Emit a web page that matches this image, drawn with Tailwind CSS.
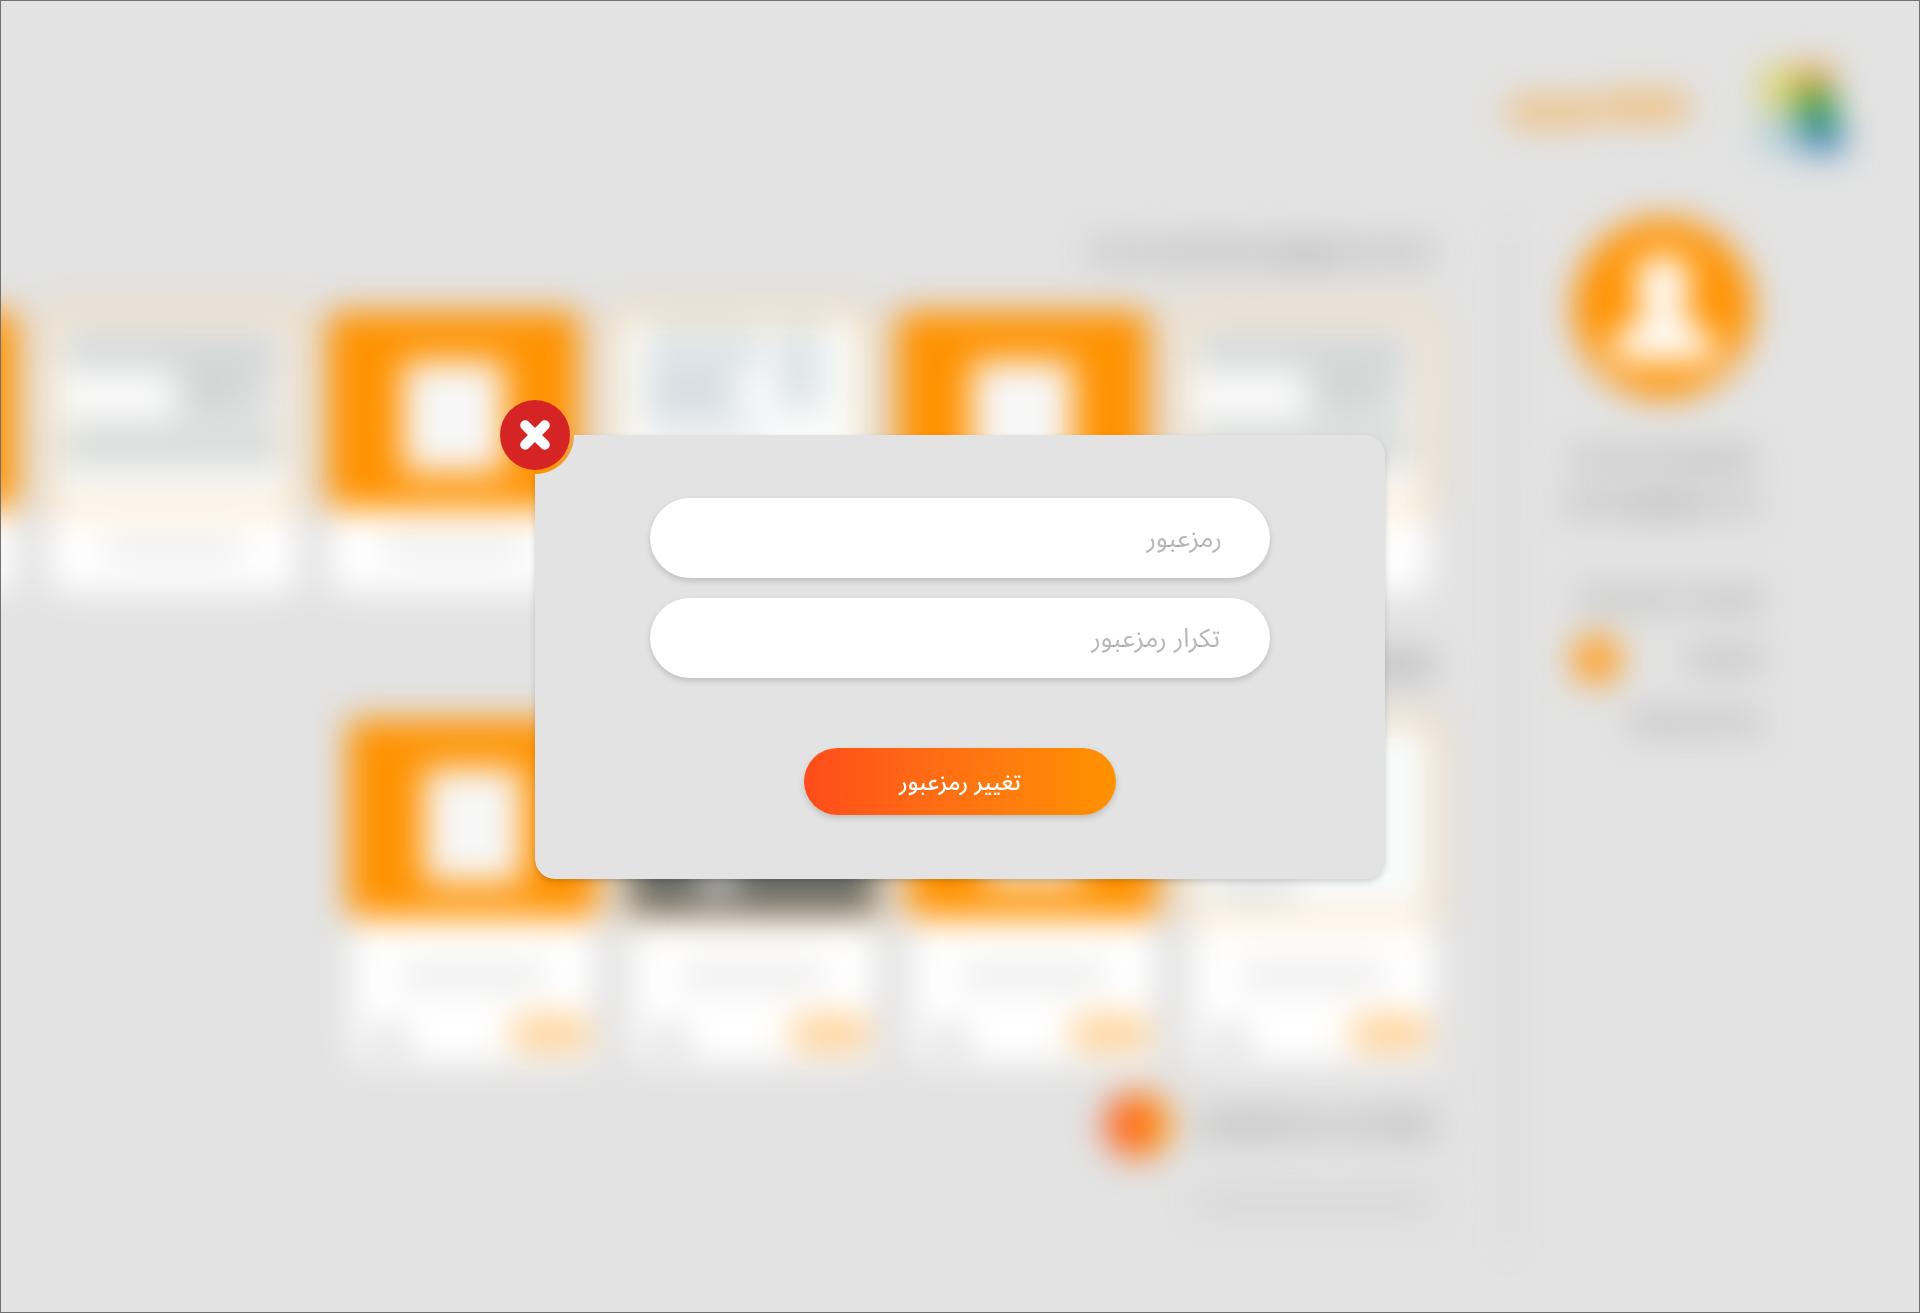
<!DOCTYPE html>
<html lang="fa" dir="rtl">
<head>
<meta charset="utf-8">
<title>تغییر رمزعبور</title>
<script src="https://cdn.jsdelivr.net/npm/@tailwindcss/browser@4"></script>
</head>
<body class="bg-[#e3e3e3] font-['Noto_Sans_Arabic','DejaVu_Sans',sans-serif]">
<div class="relative h-[1313px] w-[1920px] overflow-hidden bg-[#e3e3e3]">

  <!-- dimmed page behind the dialog -->
  <div class="h-full w-full blur-[17px]" aria-hidden="true">
    <header class="flex h-[216px] items-start pr-[72px] pt-[62px]">
      <svg class="h-[96px] w-[92px]" viewBox="0 0 92 96">
        <path d="M4 4H48V50H4Z" fill="#dcd678"/>
        <path d="M42 4H74L78 30H42Z" fill="#e39a34"/>
        <path d="M42 30H76L84 66H46Z" fill="#1f9a3e"/>
        <path d="M4 52H46V90H4Z" fill="#b0cdd6"/>
        <path d="M46 62H84L90 90H46Z" fill="#3c80bb"/>
      </svg>
      <div class="mr-[66px] mt-[30px] flex">
        <div class="h-[30px] w-[92px] rounded-full bg-[#f0bf7c]"></div>
        <div class="mt-[6px] h-[28px] w-[92px] rounded-full bg-[#f0bf7c]"></div>
      </div>
    </header>

    <div class="flex">
      <aside class="w-[411px] shrink-0 pr-[157px]">
        <div class="w-[200px]">
          <svg class="mx-auto size-[184px]" viewBox="0 0 184 184">
            <circle cx="92" cy="92" r="90" fill="#ff9200"/>
            <path d="M92 38c17 0 28 11 28 28 0 13-6 22-10 28v5c3 10 36 12 36 34 0 10-5 13-14 13H53c-9 0-14-3-14-13 0-22 33-24 36-34v-5c-4-6-11-15-11-28 0-17 11-28 28-28z" fill="#fff"/>
          </svg>
          <div class="mt-[47px] flex justify-center">
            <div class="h-[24px] w-[82px] bg-[#c5c5c5]"></div>
            <div class="h-[24px] w-[104px] bg-[#cbcbcb]"></div>
          </div>
          <div class="mt-[22px] flex">
            <div class="h-[22px] w-[66px] bg-[#cccccc]"></div>
            <div class="h-[24px] w-[66px] bg-[#bfbfbf]"></div>
            <div class="h-[22px] w-[68px] bg-[#c8c8c8]"></div>
          </div>
          <div class="mt-[71px] flex gap-2">
            <div class="h-[24px] w-[72px] bg-[#c7c7c7]"></div>
            <div class="h-[24px] w-[106px] bg-[#cacaca]"></div>
          </div>
          <div class="mt-[22px] flex h-[50px] items-center justify-between">
            <div class="h-[24px] w-[76px] bg-[#c7c7c7]"></div>
            <div class="ml-[9px] size-[49px] rounded-full bg-[#ff9c1c]"></div>
          </div>
          <div class="mt-[26px] flex">
            <div class="h-[24px] w-[66px] bg-[#cacaca]"></div>
            <div class="h-[24px] w-[68px] bg-[#c7c7c7]"></div>
          </div>
        </div>
      </aside>

      <div class="mt-[6px] h-[1032px] w-px shrink-0 bg-[#707070]"></div>

      <main class="min-w-0 flex-1 pr-[73px] pt-[24px]">
        <div class="flex h-[24px] gap-1">
          <div class="h-[24px] w-[88px] bg-[#c9c9c9]"></div>
          <div class="h-[28px] w-[74px] bg-[#c3c3c3]"></div>
          <div class="h-[26px] w-[108px] bg-[#c8c8c8]"></div>
          <div class="h-[24px] w-[64px] bg-[#cacaca]"></div>
        </div>

        <!-- purchased items -->
        <div class="mr-[3px] mt-[47px] flex gap-[30px]">
          <div class="w-[253px] shrink-0">
            <div class="flex h-[198px] flex-col items-end rounded-lg border-[3px] border-[#ff9200] bg-[#f9faf9] px-[14px] pt-[12px]">
              <div class="h-[44px] w-full bg-[#d6d9d9]"></div>
              <div class="flex h-[46px] w-full">
                <div class="h-full w-[36px] bg-[#dddfdf]"></div>
                <div class="h-full w-[70px] bg-[#d3d5d5]"></div>
              </div>
              <div class="mt-[6px] h-[46px] w-full bg-[#d9dcda]"></div>
            </div>
            <div class="mx-auto flex h-[83px] w-[245px] justify-center rounded-b-lg bg-white pt-[28px]">
              <div class="h-[24px] w-[140px] bg-[#ebebeb]"></div>
            </div>
          </div>
          <div class="w-[253px] shrink-0">
            <div class="h-[198px] rounded-lg bg-[#ff9200] pt-[50px]">
              <div class="mx-auto h-[112px] w-[101px] rounded bg-[#f7f7f7]"></div>
            </div>
            <div class="mx-auto h-[83px] w-[245px] rounded-b-lg bg-white"></div>
          </div>
          <div class="w-[253px] shrink-0">
            <div class="flex h-[198px] items-start justify-end gap-[14px] rounded-lg border-[3px] border-[#ff9200] bg-[#fbfdfc] px-[30px] pt-[8px]">
              <div class="h-[90px] w-[48px] bg-[#dee4e7]"></div>
              <div class="flex flex-col items-end">
                <div class="h-[50px] w-[116px] bg-[#dfe5e8]"></div>
                <div class="h-[42px] w-[90px] bg-[#d6dee2]"></div>
                <div class="h-[30px] w-[116px] bg-[#e8ecef]"></div>
              </div>
            </div>
            <div class="mx-auto h-[83px] w-[245px] rounded-b-lg bg-white"></div>
          </div>
          <div class="mr-[3px] w-[253px] shrink-0">
            <div class="h-[198px] rounded-lg bg-[#ff9200] pt-[50px]">
              <div class="mx-auto h-[112px] w-[101px] rounded bg-[#f7f7f7]"></div>
            </div>
            <div class="mx-auto flex h-[83px] w-[245px] justify-center rounded-b-lg bg-white pt-[28px]">
              <div class="h-[24px] w-[140px] bg-[#ebebeb]"></div>
            </div>
          </div>
          <div class="-mr-[3px] w-[253px] shrink-0">
            <div class="flex h-[198px] flex-col items-end rounded-lg border-[3px] border-[#ff9200] bg-[#f9faf9] px-[14px] pt-[12px]">
              <div class="h-[44px] w-full bg-[#d6d9d9]"></div>
              <div class="flex h-[46px] w-full">
                <div class="h-full w-[36px] bg-[#dddfdf]"></div>
                <div class="h-full w-[70px] bg-[#d3d5d5]"></div>
              </div>
              <div class="mt-[6px] h-[46px] w-full bg-[#d9dcda]"></div>
            </div>
            <div class="mx-auto flex h-[83px] w-[245px] justify-center rounded-b-lg bg-white pt-[28px]">
              <div class="h-[24px] w-[140px] bg-[#ebebeb]"></div>
            </div>
          </div>
          <div class="w-[253px] shrink-0">
            <div class="h-[198px] rounded-lg bg-[#ff9200]"></div>
            <div class="mx-auto h-[83px] w-[245px] rounded-b-lg bg-white"></div>
          </div>
        </div>

        <div class="mt-[60px] h-[26px] w-[300px] bg-[#bfbfbf]"></div>

        <!-- suggested items -->
        <div class="-mr-[3px] mt-[41px] flex gap-[29px]">
          <div class="w-[251px] shrink-0">
            <div class="flex h-[199px] items-end rounded-lg border-[3px] border-[#ff9200] bg-[#f8fbfb] pb-[16px] pr-[140px]">
              <div class="h-[20px] w-[80px] bg-[#d9dedd]"></div>
            </div>
            <div class="mx-auto h-[145px] w-[242px] rounded-b-lg bg-white pt-[45px]">
              <div class="mx-auto h-[26px] w-[142px] bg-[#ebebeb]"></div>
              <div class="mt-[26px] flex items-center justify-between pl-[18px] pr-[3px]">
                <div class="h-[32px] w-[82px] rounded-full bg-[#ffcc8a]"></div>
                <div class="mt-[12px] h-[24px] w-[38px] bg-[#d8d8d8]"></div>
              </div>
            </div>
          </div>
          <div class="w-[251px] shrink-0">
            <div class="h-[199px] rounded-lg bg-[#ff9200] pt-[49px]">
              <div class="mx-auto h-[115px] w-[98px] rounded bg-[#f7f7f7]"></div>
            </div>
            <div class="mx-auto h-[145px] w-[242px] rounded-b-lg bg-white pt-[45px]">
              <div class="mx-auto h-[26px] w-[142px] bg-[#ebebeb]"></div>
              <div class="mt-[26px] flex items-center justify-between pl-[18px] pr-[3px]">
                <div class="h-[32px] w-[82px] rounded-full bg-[#ffcc8a]"></div>
                <div class="mt-[12px] h-[24px] w-[38px] bg-[#d8d8d8]"></div>
              </div>
            </div>
          </div>
          <div class="w-[251px] shrink-0">
            <div class="flex h-[199px] items-end justify-center rounded-lg border-[3px] border-[#ff9200] bg-[#6c6e6a]">
              <div class="mb-[20px] mr-[70px] h-[36px] w-[36px] bg-[#c4c4c4]"></div>
            </div>
            <div class="mx-auto h-[145px] w-[242px] rounded-b-lg bg-white pt-[45px]">
              <div class="mx-auto h-[26px] w-[142px] bg-[#ebebeb]"></div>
              <div class="mt-[26px] flex items-center justify-between pl-[18px] pr-[3px]">
                <div class="h-[32px] w-[82px] rounded-full bg-[#ffcc8a]"></div>
                <div class="mt-[12px] h-[24px] w-[38px] bg-[#d8d8d8]"></div>
              </div>
            </div>
          </div>
          <div class="w-[251px] shrink-0">
            <div class="h-[199px] rounded-lg bg-[#ff9200] pt-[49px]">
              <div class="mx-auto h-[115px] w-[98px] rounded bg-[#f7f7f7]"></div>
            </div>
            <div class="mx-auto h-[145px] w-[242px] rounded-b-lg bg-white pt-[45px]">
              <div class="mx-auto h-[26px] w-[142px] bg-[#ebebeb]"></div>
              <div class="mt-[26px] flex items-center justify-between pl-[18px] pr-[3px]">
                <div class="h-[32px] w-[82px] rounded-full bg-[#ffcc8a]"></div>
                <div class="mt-[12px] h-[24px] w-[38px] bg-[#d8d8d8]"></div>
              </div>
            </div>
          </div>
        </div>

        <div class="mt-[29px] flex items-center">
          <div class="h-[30px] w-[56px] bg-[#c7c7c7]"></div>
          <div class="h-[26px] w-[88px] bg-[#cccccc]"></div>
          <div class="h-[28px] w-[92px] bg-[#c6c6c6]"></div>
          <div class="mr-[28px] size-[66px] rounded-full bg-linear-to-r from-[#ff4a1c] to-[#ff9600]"></div>
        </div>
        <div class="mt-[32px] h-[24px] w-[240px] bg-[#d6d6d6]"></div>
      </main>
    </div>
  </div>

  <!-- dialog -->
  <div class="absolute inset-0 flex items-start justify-center pt-[435px]">
    <div class="relative h-[444px] w-[850px]">
      <div class="h-full drop-shadow-[0_3px_3px_rgba(0,0,0,0.16)]">
        <div class="h-full rounded-[20px] rounded-tl-none bg-[#e3e3e3] mask-[radial-gradient(circle_at_0_0,transparent_38.5px,black_39.5px)]">
          <form class="flex flex-col items-center pt-[63px]">
            <div class="flex h-[80px] w-[620px] items-center rounded-full bg-white pr-[48px] pt-[2px] shadow-[0_3px_6px_rgba(0,0,0,0.16)]">
              <span class="text-[26px] leading-none text-[#707070]/50">رمزعبور</span>
            </div>
            <div class="mt-[20px] flex h-[80px] w-[620px] items-center rounded-full bg-white pr-[50px] pt-[2px] shadow-[0_3px_6px_rgba(0,0,0,0.16)]">
              <span class="text-[26px] leading-none text-[#707070]/50">تکرار رمزعبور</span>
            </div>
            <button type="button" class="mt-[70px] flex h-[67px] w-[312px] items-center justify-center rounded-full bg-linear-to-r from-[#ff4b1a] to-[#ff9200] pt-px text-[23px] font-medium leading-none text-white shadow-[0_3px_6px_rgba(0,0,0,0.16)]">تغییر رمزعبور</button>
          </form>
        </div>
      </div>
      <button type="button" aria-label="بستن" class="absolute -left-[35px] -top-[35px] flex size-[70px] items-center justify-center rounded-full bg-[#d62424]">
        <svg class="size-[30px]" viewBox="0 0 30 30" fill="none" stroke="#fff" stroke-width="10" stroke-linecap="round"><path d="M5.2 5.2L24.8 24.8M24.8 5.2L5.2 24.8"/></svg>
      </button>
    </div>
  </div>

  <div class="pointer-events-none absolute inset-0 border border-[#707070]"></div>
</div>
</body>
</html>
